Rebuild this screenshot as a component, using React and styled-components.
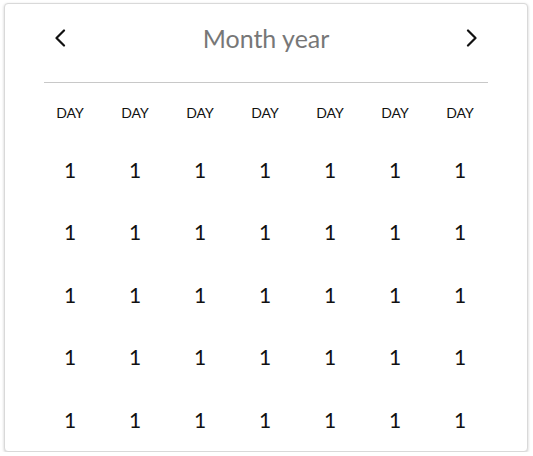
import React from 'react';
import styled, { createGlobalStyle } from 'styled-components';

const GlobalStyle = createGlobalStyle`
    body {
        margin: 0;
        background: #ffffff;
        font-family: Lato, "Noto Sans", sans-serif;
    }
`;

const Card = styled.div`
    box-sizing: border-box;
    width: 524px;
    height: 449px;
    margin: 3px 0 0 4px;
    border: 1px solid #d9d9d9;
    border-radius: 4px;
    box-shadow: 0 1px 3px rgba(0, 0, 0, 0.2);
    background: #ffffff;
    padding-top: 10px;
    overflow: hidden;
`;

const Header = styled.div`
    display: flex;
    align-items: center;
    justify-content: space-between;
    height: 48px;
    margin: 0 39px;
    padding: 0 10px;
`;

const NavButton = styled.button`
    display: flex;
    align-items: center;
    justify-content: center;
    width: 12px;
    height: 20px;
    padding: 0;
    border: none;
    background: none;
    color: #111111;
    cursor: pointer;
`;

const Title = styled.div`
    font-size: 25px;
    color: #777777;
`;

const Divider = styled.hr`
    margin: 20px 39px 0;
    border: none;
    border-top: 1px solid #c8c8c8;
`;

const Grid = styled.div`
    display: grid;
    grid-template-columns: repeat(7, 65px);
    grid-auto-rows: 62.5px;
    margin-left: 32.5px;
`;

const DayRow = styled(Grid)`
    grid-auto-rows: 40px;
    margin-top: 9px;
    margin-bottom: 6px;
`;

const DayName = styled.div`
    display: flex;
    align-items: center;
    justify-content: center;
    font-size: 14px;
    color: #111111;
`;

const DateCell = styled.div`
    display: flex;
    align-items: center;
    justify-content: center;
    font-size: 21px;
    color: #111111;
`;

const Chevron = ({ dir }) => (
    <svg width="12" height="18" viewBox="0 0 12 18" fill="none">
        <polyline
            points={dir === 'left' ? '10,1.5 2.5,9 10,16.5' : '2,1.5 9.5,9 2,16.5'}
            stroke="currentColor"
            strokeWidth="2.2"
            strokeLinecap="round"
            strokeLinejoin="round"
        />
    </svg>
);

const days = Array(7).fill('DAY');
const weeks = Array(5).fill(Array(7).fill(1));

const App = () => (
    <>
        <GlobalStyle />
        <Card>
            <Header>
                <NavButton aria-label="Previous month">
                    <Chevron dir="left" />
                </NavButton>
                <Title>Month year</Title>
                <NavButton aria-label="Next month">
                    <Chevron dir="right" />
                </NavButton>
            </Header>
            <Divider />
            <DayRow>
                {days.map((d, i) => (
                    <DayName key={i}>{d}</DayName>
                ))}
            </DayRow>
            <Grid>
                {weeks.map((week, w) =>
                    week.map((n, i) => <DateCell key={`${w}-${i}`}>{n}</DateCell>)
                )}
            </Grid>
        </Card>
    </>
);

export default App;
